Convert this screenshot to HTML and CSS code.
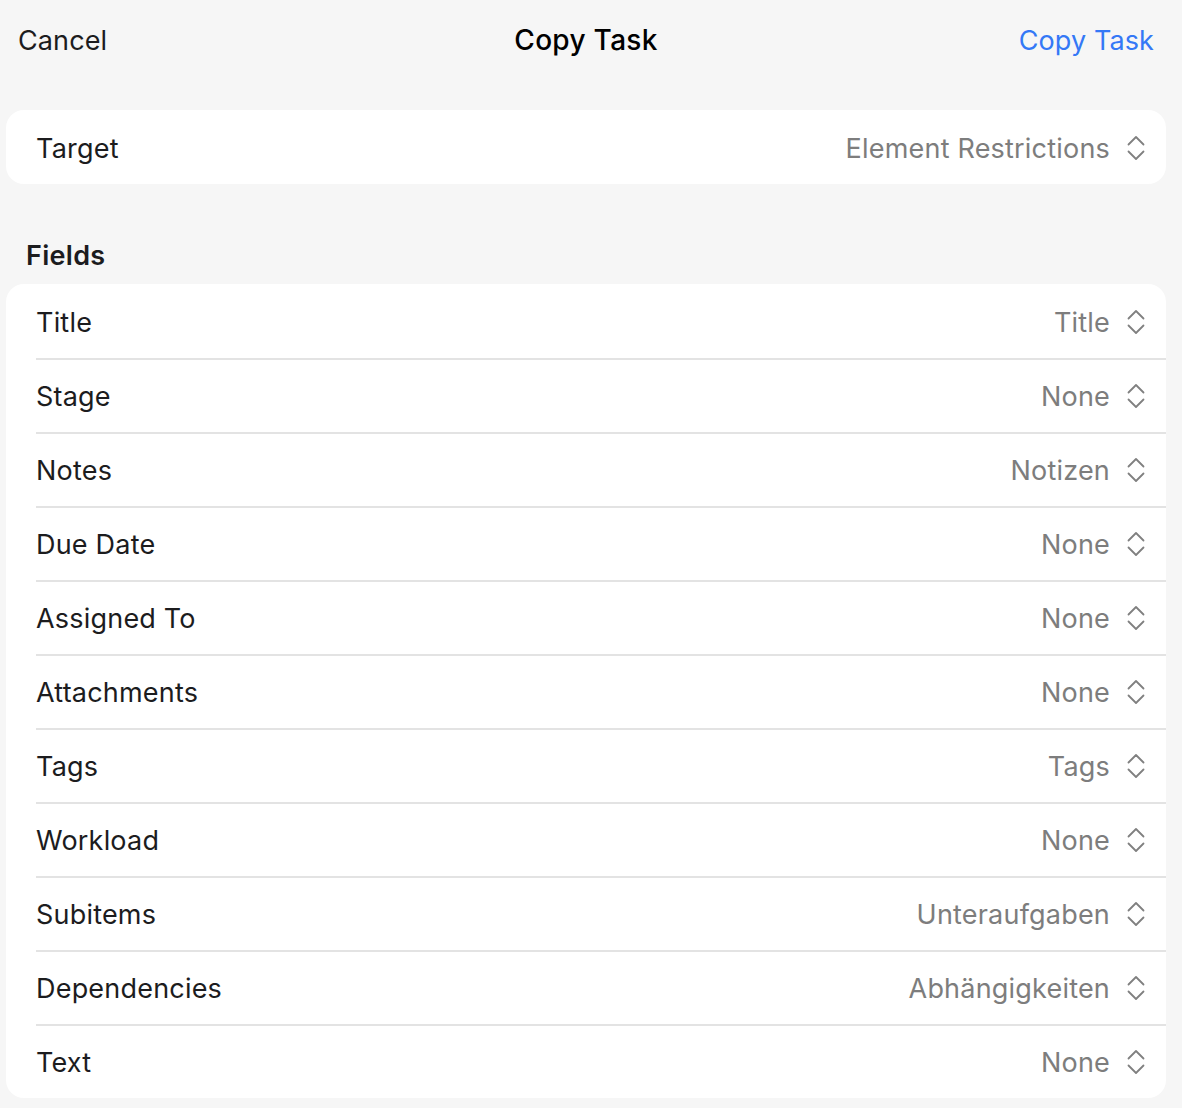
FILE: index.html
```html
<!DOCTYPE html>
<html>
<head>
<meta charset="utf-8">
<link rel="stylesheet" href="styles.css">
</head>
<body>
<div class="sheet">
  <header class="nav">
    <span class="nav-btn cancel">Cancel</span>
    <span class="nav-title">Copy Task</span>
    <span class="nav-btn confirm">Copy Task</span>
  </header>

  <section class="card">
    <div class="row">
      <span class="label">Target</span>
      <span class="value">Element Restrictions<svg class="updown" viewBox="0 0 18 28"><path d="M1.5 10.5 L9 3 L16.5 10.5 M1.5 17.5 L9 25 L16.5 17.5"/></svg></span>
    </div>
  </section>

  <h2 class="section-title">Fields</h2>

  <section class="card list">
    <div class="row"><span class="label">Title</span><span class="value">Title<svg class="updown" viewBox="0 0 18 28"><path d="M1.5 10.5 L9 3 L16.5 10.5 M1.5 17.5 L9 25 L16.5 17.5"/></svg></span></div>
    <div class="row"><span class="label">Stage</span><span class="value">None<svg class="updown" viewBox="0 0 18 28"><path d="M1.5 10.5 L9 3 L16.5 10.5 M1.5 17.5 L9 25 L16.5 17.5"/></svg></span></div>
    <div class="row"><span class="label">Notes</span><span class="value">Notizen<svg class="updown" viewBox="0 0 18 28"><path d="M1.5 10.5 L9 3 L16.5 10.5 M1.5 17.5 L9 25 L16.5 17.5"/></svg></span></div>
    <div class="row"><span class="label">Due Date</span><span class="value">None<svg class="updown" viewBox="0 0 18 28"><path d="M1.5 10.5 L9 3 L16.5 10.5 M1.5 17.5 L9 25 L16.5 17.5"/></svg></span></div>
    <div class="row"><span class="label">Assigned To</span><span class="value">None<svg class="updown" viewBox="0 0 18 28"><path d="M1.5 10.5 L9 3 L16.5 10.5 M1.5 17.5 L9 25 L16.5 17.5"/></svg></span></div>
    <div class="row"><span class="label">Attachments</span><span class="value">None<svg class="updown" viewBox="0 0 18 28"><path d="M1.5 10.5 L9 3 L16.5 10.5 M1.5 17.5 L9 25 L16.5 17.5"/></svg></span></div>
    <div class="row"><span class="label">Tags</span><span class="value">Tags<svg class="updown" viewBox="0 0 18 28"><path d="M1.5 10.5 L9 3 L16.5 10.5 M1.5 17.5 L9 25 L16.5 17.5"/></svg></span></div>
    <div class="row"><span class="label">Workload</span><span class="value">None<svg class="updown" viewBox="0 0 18 28"><path d="M1.5 10.5 L9 3 L16.5 10.5 M1.5 17.5 L9 25 L16.5 17.5"/></svg></span></div>
    <div class="row"><span class="label">Subitems</span><span class="value">Unteraufgaben<svg class="updown" viewBox="0 0 18 28"><path d="M1.5 10.5 L9 3 L16.5 10.5 M1.5 17.5 L9 25 L16.5 17.5"/></svg></span></div>
    <div class="row"><span class="label">Dependencies</span><span class="value">Abhängigkeiten<svg class="updown" viewBox="0 0 18 28"><path d="M1.5 10.5 L9 3 L16.5 10.5 M1.5 17.5 L9 25 L16.5 17.5"/></svg></span></div>
    <div class="row"><span class="label">Text</span><span class="value">None<svg class="updown" viewBox="0 0 18 28"><path d="M1.5 10.5 L9 3 L16.5 10.5 M1.5 17.5 L9 25 L16.5 17.5"/></svg></span></div>
  </section>
</div>
</body>
</html>
```

FILE: styles.css
```css
* { box-sizing: border-box; }
html, body {
  margin: 0;
  padding: 0;
  background: #f6f6f6;
}
body {
  font-family: Inter, "Noto Sans", "Liberation Sans", sans-serif;
  color: #1c1c1e;
  -webkit-font-smoothing: antialiased;
}
.sheet {
  width: 1182px;
  padding: 0 16px 0 6px;
}
.nav {
  height: 80px;
  display: flex;
  align-items: center;
  justify-content: space-between;
  padding: 0 12px 0 12px;
  position: relative;
  font-size: 27px;
  letter-spacing: 0.1px;
}
.cancel { color: #1c1c1e; }
.confirm { color: #3478f6; }
.nav-title {
  position: absolute;
  left: 0;
  right: 0;
  text-align: center;
  font-weight: 500;
  font-size: 28px;
  letter-spacing: 0.3px;
  color: #000;
  pointer-events: none;
}
.card {
  background: #ffffff;
  border-radius: 18px;
  margin-top: 30px;
  overflow: hidden;
}
.list { margin-top: 0; }
.row {
  height: 74px;
  display: flex;
  align-items: center;
  justify-content: space-between;
  padding: 2px 21px 0 30px;
  font-size: 27px;
  letter-spacing: 0.2px;
  position: relative;
}
.list .row + .row::before {
  content: "";
  position: absolute;
  left: 30px;
  right: 0;
  top: 0;
  height: 2px;
  background: #e3e3e3;
}
.label { color: #1c1c1e; }
.value {
  color: #7d7d7d;
  display: flex;
  align-items: center;
}
.updown {
  width: 18px;
  height: 28px;
  margin-left: 17px;
  margin-top: -1px;
  fill: none;
  stroke: #808080;
  stroke-width: 1.8;
  stroke-linecap: round;
  stroke-linejoin: round;
}
.section-title {
  margin: 0;
  height: 100px;
  padding: 52px 0 0 20px;
  font-size: 27px;
  letter-spacing: 0.3px;
  font-weight: 600;
  line-height: 40px;
}
```
